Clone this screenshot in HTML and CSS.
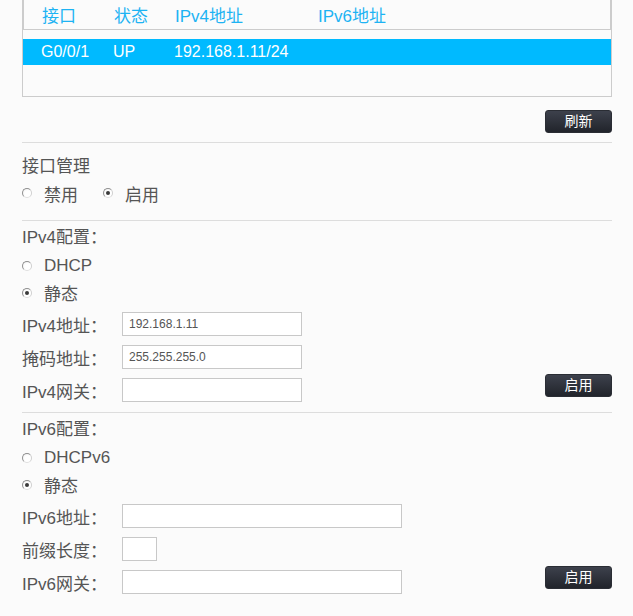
FILE: index.html
```html
<!DOCTYPE html>
<html lang="zh-CN">
<head>
<meta charset="utf-8">
<title>接口配置</title>
<link rel="stylesheet" href="styles.css">
</head>
<body>
<div class="page">
  <div class="grid">
    <div class="grid-head">
      <span class="c1">接口</span><span class="c2">状态</span><span class="c3">IPv4地址</span><span class="c4">IPv6地址</span>
    </div>
    <div class="grid-body">
      <div class="grid-row selected">
        <span class="c1">G0/0/1</span><span class="c2">UP</span><span class="c3">192.168.1.11/24</span><span class="c4"></span>
      </div>
    </div>
  </div>
  <div class="btn-bar"><button class="btn">刷新</button></div>
  <div class="rule"></div>

  <div class="section first">
    <div class="title">接口管理</div>
    <div class="radio-line">
      <label class="opt"><span class="radio"></span>禁用</label>
      <label class="opt"><span class="radio checked"></span>启用</label>
    </div>
  </div>
  <div class="rule mid"></div>

  <div class="section">
    <div class="title row29">IPv4配置：</div>
    <div class="radio-row"><span class="radio"></span>DHCP</div>
    <div class="radio-row"><span class="radio checked"></span>静态</div>
    <div class="fields-wrap">
      <div class="fields">
        <div class="field"><span class="label">IPv4地址：</span><input class="input w180" type="text" value="192.168.1.11"></div>
        <div class="field"><span class="label">掩码地址：</span><input class="input w180" type="text" value="255.255.255.0"></div>
        <div class="field"><span class="label">IPv4网关：</span><input class="input w180" type="text" value=""></div>
      </div>
      <button class="btn apply">启用</button>
    </div>
  </div>
  <div class="rule mid"></div>

  <div class="section">
    <div class="title row29">IPv6配置：</div>
    <div class="radio-row"><span class="radio"></span>DHCPv6</div>
    <div class="radio-row"><span class="radio checked"></span>静态</div>
    <div class="fields-wrap">
      <div class="fields">
        <div class="field"><span class="label">IPv6地址：</span><input class="input w280" type="text" value=""></div>
        <div class="field"><span class="label">前缀长度：</span><input class="input w35" type="text" value=""></div>
        <div class="field"><span class="label">IPv6网关：</span><input class="input w280" type="text" value=""></div>
      </div>
      <button class="btn apply">启用</button>
    </div>
  </div>
</div>
</body>
</html>
```
FILE: styles.css
```css
html, body {
  margin: 0;
  padding: 0;
  background: #fbfbfb;
}
body {
  font-family: "Liberation Sans", Arial, "Noto Sans CJK SC", sans-serif;
  color: #555;
  font-size: 17px;
}
.page {
  margin-left: 22px;
  width: 590px;
}
.grid-head,
.grid-row {
  display: grid;
  grid-template-columns: 72px 61px 143px 1fr;
  align-items: center;
}
.grid-head {
  height: 29px;
  padding-left: 18px;
  border-left: 2px solid #cccccc;
  border-right: 2px solid #cccccc;
  border-bottom: 1px solid #cccccc;
  color: #1db3f3;
  font-size: 17px;
}
.grid-body {
  padding-top: 9px;
  box-sizing: border-box;
  border-left: 1px solid #cccccc;
  border-right: 1px solid #cccccc;
  border-bottom: 1px solid #cccccc;
  height: 67px;
}
.grid-row {
  height: 26px;
  padding-left: 18px;
  font-size: 16px;
}
.grid-row.selected {
  background: #00baff;
  color: #ffffff;
}
.btn-bar {
  display: flex;
  justify-content: flex-end;
  margin-top: 13px;
}
.btn {
  width: 67px;
  height: 23px;
  padding: 0;
  border: 1px solid #2a2d34;
  border-radius: 3px;
  background: linear-gradient(#3d414c, #21242b);
  color: #ffffff;
  font-family: "Liberation Sans", Arial, "Noto Sans CJK SC", sans-serif;
  font-size: 14px;
  line-height: 21px;
  cursor: pointer;
}
.rule {
  height: 1px;
  background: #dddddd;
  margin-top: 9px;
}
.rule.mid {
  margin-top: 0;
}
.section.first {
  padding-top: 11px;
  padding-bottom: 14px;
}
.section {
  padding-top: 2px;
  padding-bottom: 10px;
}
.title {
  height: 26px;
  line-height: 26px;
}
.title.row29 {
  height: 29px;
  line-height: 29px;
}
.radio-line {
  display: flex;
  align-items: center;
  height: 26px;
}
.opt {
  display: flex;
  align-items: center;
  margin-right: 25px;
}
.radio-row {
  display: flex;
  align-items: center;
  height: 27px;
}
.radio {
  width: 10px;
  height: 10px;
  box-sizing: border-box;
  border: 1px solid;
  border-color: #8f8f8f #cfcfcf #dedede #8f8f8f;
  border-radius: 50%;
  background: radial-gradient(circle at 60% 60%, #ffffff 45%, #ececec 100%);
  margin-right: 12px;
  display: flex;
  align-items: center;
  justify-content: center;
}
.radio.checked::after {
  content: "";
  width: 4px;
  height: 4px;
  border-radius: 50%;
  background: #3a3a3a;
}
.fields-wrap {
  display: flex;
  justify-content: space-between;
  align-items: flex-end;
  margin-top: 6px;
}
.fields {
  display: flex;
  flex-direction: column;
  gap: 9px;
}
.field {
  display: flex;
  align-items: center;
  height: 24px;
}
.label {
  width: 100px;
}
.input {
  height: 24px;
  box-sizing: border-box;
  border: 1px solid #c8c8c8;
  background: #ffffff;
  padding: 0 6px;
  font-family: "Liberation Sans", Arial, sans-serif;
  font-size: 12px;
  color: #555;
  outline: none;
}
.w180 { width: 180px; }
.w280 { width: 280px; }
.w35 { width: 35px; }
.apply {
  margin-bottom: 5px;
}
```
